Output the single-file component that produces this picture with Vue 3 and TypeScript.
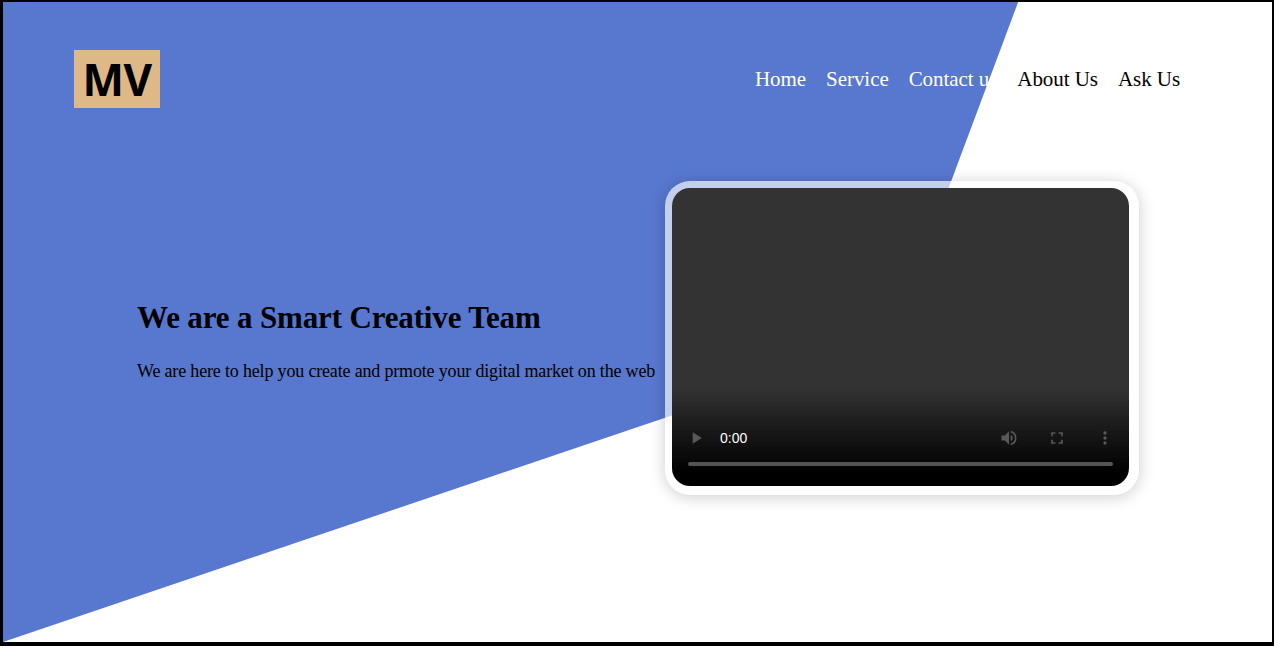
<script setup lang="ts">
interface NavLink {
  label: string
  light: boolean
}

const links: NavLink[] = [
  { label: 'Home', light: true },
  { label: 'Service', light: true },
  { label: 'Contact us', light: true },
  { label: 'About Us', light: false },
  { label: 'Ask Us', light: false },
]
</script>

<template>
  <div class="page">
    <header class="header">
      <div class="logo">MV</div>
      <nav class="nav">
        <a v-for="link in links" :key="link.label" :class="{ light: link.light }">{{ link.label }}</a>
      </nav>
    </header>
    <main class="hero">
      <section class="copy">
        <h1>We are a Smart Creative Team</h1>
        <p>We are here to help you create and prmote your digital market on the web</p>
      </section>
      <div class="frame">
        <div class="player">
          <div class="controls">
            <svg class="icon" viewBox="0 0 24 24"><path d="M8 5v14l11-7z" /></svg>
            <span class="time">0:00</span>
            <svg class="icon" viewBox="0 0 24 24"><path d="M3 9v6h4l5 5V4L7 9H3zm13.5 3A4.5 4.5 0 0 0 14 7.97v8.05A4.5 4.5 0 0 0 16.5 12zM14 3.23v2.06a7 7 0 0 1 0 13.42v2.06a9 9 0 0 0 0-17.54z" /></svg>
            <svg class="icon" viewBox="0 0 24 24"><path d="M7 14H5v5h5v-2H7v-3zm-2-4h2V7h3V5H5v5zm12 7h-3v2h5v-5h-2v3zM14 5v2h3v3h2V5h-5z" /></svg>
            <svg class="icon" viewBox="0 0 24 24"><path d="M12 8a2 2 0 1 0 0-4 2 2 0 0 0 0 4zm0 2a2 2 0 1 0 0 4 2 2 0 0 0 0-4zm0 6a2 2 0 1 0 0 4 2 2 0 0 0 0-4z" /></svg>
          </div>
          <div class="track"></div>
        </div>
      </div>
    </main>
  </div>
</template>

<style>
body {
  background: #fff;
  overflow: hidden;
}
</style>

<style scoped>
.page {
  box-sizing: border-box;
  width: 1274px;
  height: 646px;
  border: solid #000;
  border-width: 2px 2px 4px 3px;
  font-family: "Liberation Serif", "Times New Roman", serif;
  color: #000;
  position: relative;
  isolation: isolate;
}
.page::before {
  content: "";
  position: absolute;
  inset: 0;
  z-index: -1;
  background: #5877cf;
  clip-path: polygon(0 0, 80% 0, 70% 53%, 0 100%);
}
.header {
  display: flex;
  align-items: center;
  justify-content: space-between;
  padding: 48px 92px 0 71px;
}
.logo {
  width: 86px;
  height: 58px;
  box-sizing: border-box;
  background: #deb887;
  font: bold 44px/58px "Noto Sans", "Open Sans", sans-serif;
  letter-spacing: -0.5px;
  text-align: center;
}
.nav {
  display: flex;
  gap: 20px;
  font-size: 21px;
  line-height: 24px;
  letter-spacing: -0.06px;
}
.light {
  color: #fff;
}
.hero {
  display: flex;
  align-items: flex-start;
  padding: 73px 0 0 134px;
}
.copy {
  width: 528px;
  padding-top: 119px;
  white-space: nowrap;
}
h1 {
  margin: 0;
  font-size: 31px;
  line-height: 36px;
  letter-spacing: -0.15px;
}
p {
  margin: 25px 0 0;
  font-size: 18px;
  line-height: 20px;
  letter-spacing: -0.17px;
}
.frame {
  box-sizing: border-box;
  width: 474px;
  height: 314px;
  padding: 7px 10px 9px 7px;
  border-radius: 25px;
  background: rgba(255, 255, 255, 0.65);
  box-shadow: 0 2px 16px rgba(0, 0, 0, 0.2);
}
.player {
  box-sizing: border-box;
  height: 298px;
  padding: 234px 16px 0;
  border-radius: 18px;
  background: linear-gradient(#333 0, #333 200px, #1c1c1c 236px, #000 286px);
}
.controls {
  display: flex;
  align-items: center;
  height: 32px;
}
.icon {
  width: 20px;
  height: 20px;
  fill: #585858;
  margin-right: 28px;
}
.icon:first-child {
  margin: 0 14px 0 -2px;
}
.icon:last-child {
  margin-right: -2px;
}
.time {
  flex: 1;
  font: 14px/16px "Liberation Sans", Arial, sans-serif;
  color: #fff;
}
.track {
  height: 4px;
  margin-top: 8px;
  border-radius: 2px;
  background: #545454;
}
</style>
